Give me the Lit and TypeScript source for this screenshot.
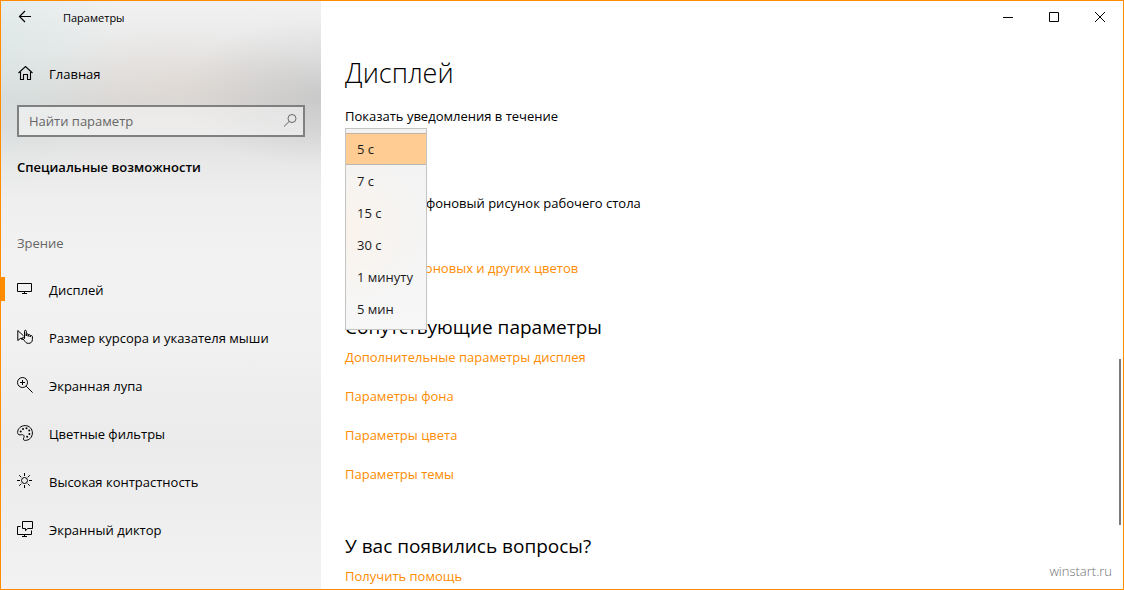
import { LitElement, html, svg, css } from "lit";
import { customElement, state } from "lit/decorators.js";

const icons = {
  back: svg`<path d="M14 7.5H2.5M8 2L2.5 7.5L8 13" stroke-width="1.2"/>`,
  home: svg`<path d="M1.5 7L8.5 0.5L15.5 7M3.5 6V13.5H6.5V8.5H10.5V13.5H13.5V6" stroke-width="1.1"/>`,
  search: svg`<circle cx="9" cy="5.5" r="4"/><path d="M6.2 8.5L1 13.5"/>`,
  display: svg`<path d="M0.5 2.5H14.5V10.5H0.5ZM7.5 10.5V12.5M5 12.5H10"/>`,
  pointer: svg`<path d="M6 10.5L4 9L0.8 11.5V1.5L6.5 6.8M4 9L5.2 11"/>
    <path d="M7.5 9.8V2.2C7.5 0.9 9.3 0.9 9.3 2.2V7V5.4C9.3 4.6 11.2 4.6 11.2 5.6V7.4V6C11.2 5.3 13.2 5.3 13.2 6.2V8V7C13.4 6.2 15.4 6.4 15.4 7.5V10.5C15.4 13 13.8 14.4 11.5 14.4C9.2 14.4 8.4 13 7.5 11.8L5.6 9.3C5 8.4 6.2 7.7 7.5 9.2" />`,
  magnifier: svg`<circle cx="5.5" cy="5.5" r="5"/><path d="M9.2 9.2L15.6 15.6M3 5.5H8M5.5 3V8"/>`,
  palette: svg`<path d="M0.6 7.5C0.6 3.6 4 0.6 8.2 0.6C12.4 0.6 15.4 3.9 15.4 8C15.4 12.2 12.2 15.4 8.3 15.4C6.6 15.4 6 14.4 6.6 13.2C7.2 12 7.4 10.8 6.4 10C5.3 9.2 4.2 9.9 3 9.9C1.4 9.9 0.6 8.9 0.6 7.5Z"/>
    <g fill="currentColor" stroke="none"><circle cx="3.7" cy="6.5" r="1"/><circle cx="6" cy="3.9" r="1"/><circle cx="9.5" cy="3.2" r="1"/><circle cx="12.2" cy="5.6" r="1"/><circle cx="12.4" cy="9" r="1"/><circle cx="10.2" cy="11.8" r="1"/></g>`,
  contrast: svg`<circle cx="7.5" cy="7.5" r="3"/><path d="M7.5 0V3M7.5 12V15M0 7.5H3M12 7.5H15M2.2 2.2L4.3 4.3M10.7 10.7L12.8 12.8M12.8 2.2L10.7 4.3M4.3 10.7L2.2 12.8"/>`,
  narrator: svg`<path d="M5.5 0.5H15.5V7.5H10.5L8.5 9.8V7.5H5.5ZM3.5 5.5H0.5V13.5H14.5V9.5M7.5 13.5V15.5M5 15.5H10"/>`,
};

const glyph = (name: keyof typeof icons) => html`
  <svg class="icon" viewBox="0 0 16 16" width="16" height="16" fill="none" stroke="currentColor" aria-hidden="true">${icons[name]}</svg>`;

const sections: { icon: keyof typeof icons; label: string }[] = [
  { icon: "display", label: "Дисплей" },
  { icon: "pointer", label: "Размер курсора и указателя мыши" },
  { icon: "magnifier", label: "Экранная лупа" },
  { icon: "palette", label: "Цветные фильтры" },
  { icon: "contrast", label: "Высокая контрастность" },
  { icon: "narrator", label: "Экранный диктор" },
];

const durations = ["5 с", "7 с", "15 с", "30 с", "1 минуту", "5 мин"];

const related = [
  "Дополнительные параметры дисплея",
  "Параметры фона",
  "Параметры цвета",
  "Параметры темы",
];

@customElement("settings-sidebar")
class SettingsSidebar extends LitElement {
  @state() private current = 0;

  static styles = css`
    :host {
      display: block;
      color: #000;
      background:
        radial-gradient(ellipse 140px 76px at 100% 92px, rgba(140, 140, 140, 0.22), rgba(150, 150, 150, 0.14) 45%, transparent),
        radial-gradient(ellipse 120px 150px at 0 40px, rgba(205, 228, 226, 0.4), transparent),
        radial-gradient(ellipse 150px 60px at 55% 85px, rgba(225, 210, 198, 0.35), transparent),
        linear-gradient(#f1f1f1, #e9e9e9 50px, #dadada 100px, #dedede 130px, #e8e8e8 160px, #efefef 200px, #f2f2f2 260px, #f1f1f1 340px, #ebebeb 440px, #f2f2f2);
    }
    .titlebar { display: flex; align-items: center; height: 32px; font-size: 11px; line-height: 16px; }
    .titlebar button { display: flex; align-items: center; justify-content: center; width: 48px; height: 32px; }
    .title { margin: 2px 0 0 14px; }
    button { margin: 0; padding: 0; border: 0; background: none; color: inherit; font: inherit; }
    .icon { flex: none; display: block; }
    .row { display: flex; align-items: center; gap: 16px; width: 100%; height: 48px; padding: 0 16px; box-sizing: border-box; color: inherit; text-decoration: none; line-height: 20px; }
    .home { margin-top: 17px; }
    .search { display: flex; align-items: center; height: 32px; margin: 7px 16px 0; padding: 0 4px 0 10px; box-sizing: border-box; border: 2px solid #808080; background: rgba(255, 255, 255, 0.45); color: #666; }
    .search input { flex: 1; min-width: 0; padding: 0; border: 0; outline: 0; background: none; font: inherit; color: #000; }
    .search input::placeholder { color: #666; opacity: 1; }
    h2 { margin: 20px 16px 0; font-size: 13px; line-height: 20px; font-weight: 600; }
    h3 { margin: 56px 16px 0; font-size: 13px; line-height: 20px; font-weight: 400; color: #666; }
    ul { margin: 12px 0 0; padding: 0; list-style: none; }
    li { display: flex; align-items: center; }
    li span { margin-top: 2px; }
    .active { background: linear-gradient(#ff8c00, #ff8c00) 0 center / 4px 24px no-repeat; }
  `;

  render() {
    return html`
      <div class="titlebar">
        <button aria-label="Назад">${glyph("back")}</button>
        <span class="title">Параметры</span>
      </div>
      <a class="row home" href="#home">${glyph("home")}<span>Главная</span></a>
      <label class="search">
        <input type="text" placeholder="Найти параметр" aria-label="Найти параметр" />
        ${glyph("search")}
      </label>
      <h2>Специальные возможности</h2>
      <h3>Зрение</h3>
      <ul>
        ${sections.map((s, i) => html`
          <li class=${i === this.current ? "active" : ""}>
            <button class="row" @click=${() => (this.current = i)}>${glyph(s.icon)}<span>${s.label}</span></button>
          </li>`)}
      </ul>
    `;
  }
}

@customElement("display-page")
class DisplayPage extends LitElement {
  static styles = css`
    :host { display: block; padding: 22px 24px 0; color: #000; }
    h1 { margin: 0; font-size: 27px; line-height: 36px; font-weight: 300; }
    h2 { margin: 0; font-size: 19px; line-height: 28px; font-weight: 400; }
    .field { position: relative; margin-top: 15px; line-height: 20px; }
    .field label { display: block; }
    .popup { position: absolute; z-index: 1; top: 22px; left: 0; width: 82px; height: 202px; margin: 0; padding: 4px 0; box-sizing: border-box; overflow: hidden; border: 1px solid #c3c3c3; border-radius: 0; outline: 0; background: radial-gradient(circle at 0 50%, #faf3ec, transparent 80px), linear-gradient(#f2f2f2, #f7f7f7); font: inherit; color: #1a1a1a; }
    .popup option { height: 32px; min-height: 32px; padding: 7px 11px 5px; box-sizing: border-box; line-height: 20px; color: #1a1a1a; }
    .popup option:checked { color: #1a1a1a; background: linear-gradient(#c4b29c, #c4b29c) 0 0 / 100% 1px no-repeat, linear-gradient(#b9b5b0, #b9b5b0) 0 100% / 100% 1px no-repeat, linear-gradient(#ffcd93, #ffcd93); }
    p { margin: 67px 0 0; line-height: 20px; }
    a { color: #ff8c00; text-decoration: none; line-height: 20px; }
    .colors { display: block; margin-top: 45px; }
    .related { margin-top: 35px; }
    ul { display: grid; gap: 19px; margin: 6px 0 0; padding: 0; list-style: none; line-height: 20px; }
    .help { margin-top: 48px; }
    .help a { display: block; margin-top: 6px; }
  `;

  render() {
    return html`
      <h1>Дисплей</h1>
      <div class="field">
        <label for="duration">Показать уведомления в течение</label>
        <select class="popup" id="duration" size="6">
          ${durations.map((d, i) => html`<option ?selected=${i === 0}>${d}</option>`)}
        </select>
      </div>
      <p>Отображать фоновый рисунок рабочего стола</p>
      <a class="colors" href="#colors">Настройка фоновых и других цветов</a>
      <section class="related">
        <h2>Сопутствующие параметры</h2>
        <ul>${related.map((r) => html`<li><a href="#">${r}</a></li>`)}</ul>
      </section>
      <section class="help">
        <h2>У вас появились вопросы?</h2>
        <a href="#help">Получить помощь</a>
      </section>
    `;
  }
}

@customElement("app-root")
class AppRoot extends LitElement {
  static styles = css`
    :host { display: grid; grid-template-columns: 320px minmax(0, 1fr); position: relative; height: 100vh; box-sizing: border-box; overflow: hidden; border: 1px solid #ff8c00; background: #fff; font: 13px "Open Sans", "Noto Sans", sans-serif; }
    main { min-width: 0; overflow: hidden; }
    .caption { display: flex; justify-content: flex-end; height: 32px; }
    .caption button { display: flex; align-items: center; justify-content: center; width: 46px; height: 32px; padding: 0; border: 0; background: none; color: #000; }
    .thumb { position: absolute; right: 2px; bottom: 64px; width: 2px; height: 166px; background: #7a7a7a; }
    .mark { position: absolute; right: 11px; bottom: 8px; font-size: 13px; font-weight: 300; line-height: 20px; color: #707070; }
  `;

  render() {
    const win = (d: string) => html`<svg width="12" height="12" viewBox="0 0 12 12" fill="none" stroke="#000" aria-hidden="true"><path d=${d} /></svg>`;
    return html`
      <settings-sidebar></settings-sidebar>
      <main>
        <div class="caption">
          <button aria-label="Свернуть">${win("M1 6.5H11")}</button>
          <button aria-label="Развернуть">${win("M1.5 1.5H10.5V10.5H1.5Z")}</button>
          <button aria-label="Закрыть">${win("M1 1L11 11M11 1L1 11")}</button>
        </div>
        <display-page></display-page>
      </main>
      <div class="thumb"></div>
      <span class="mark">winstart.ru</span>
    `;
  }
}
